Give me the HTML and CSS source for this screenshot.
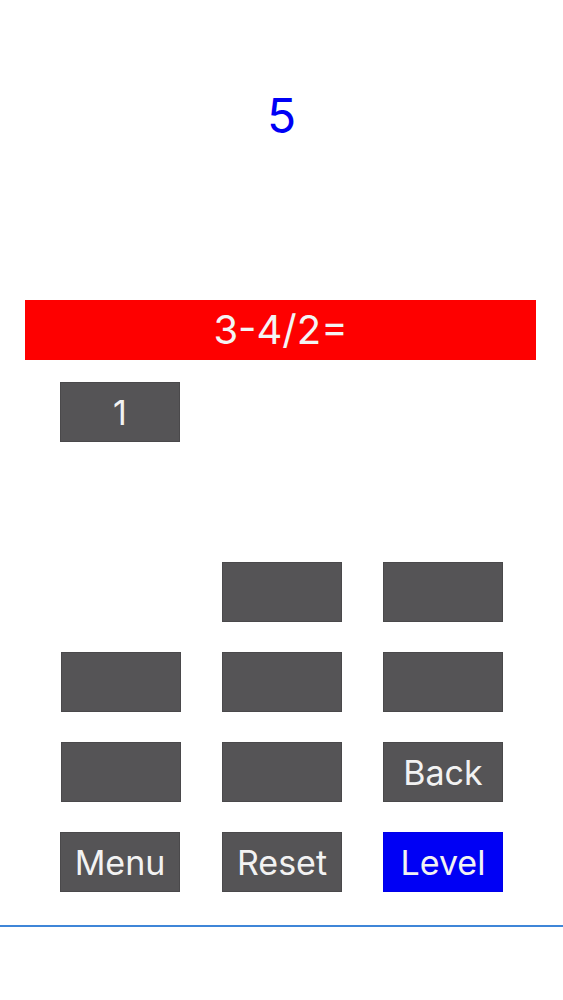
FILE: index.html
```html
<!DOCTYPE html>
<html>
<head>
<meta charset="utf-8">
<link rel="stylesheet" href="styles.css">
</head>
<body>
<div class="app">
  <div class="score">5</div>
  <div class="question">3-4/2=</div>
  <div class="answer-row">
    <div class="tile">1</div>
  </div>
  <div class="keypad">
    <div class="key key-empty"></div>
    <div class="key"></div>
    <div class="key"></div>
    <div class="key"></div>
    <div class="key"></div>
    <div class="key"></div>
    <div class="key"></div>
    <div class="key"></div>
    <div class="key">Back</div>
    <div class="key key-menu">Menu</div>
    <div class="key">Reset</div>
    <div class="key key-level">Level</div>
  </div>
  <div class="divider"></div>
</div>
</body>
</html>
```

FILE: styles.css
```css
html, body {
  margin: 0;
  padding: 0;
  background: #ffffff;
}

body {
  font-family: Inter, "Liberation Sans", Arial, sans-serif;
  width: 563px;
  height: 1000px;
  overflow: hidden;
}

.app {
  display: flex;
  flex-direction: column;
}

.score {
  height: 300px;
  box-sizing: border-box;
  padding-top: 92px;
  font-size: 48px;
  line-height: 48px;
  text-align: center;
  color: #0000f5;
}

.question {
  margin-left: 25px;
  width: 511px;
  height: 60px;
  line-height: 60px;
  background: #fe0000;
  color: #f4f4f4;
  font-size: 40px;
  text-align: center;
}

.answer-row {
  display: flex;
  padding-left: 60px;
  margin-top: 22px;
}

.tile,
.key {
  width: 120px;
  height: 60px;
  box-sizing: border-box;
  background: #555456;
  border: 1px solid #4a494b;
  color: #f2f2f2;
  font-size: 34px;
  display: flex;
  align-items: center;
  justify-content: center;
}

.keypad {
  display: grid;
  grid-template-columns: repeat(3, 120px);
  column-gap: 41px;
  row-gap: 30px;
  padding-left: 61px;
  margin-top: 120px;
}

.key-empty {
  visibility: hidden;
}

.key-menu {
  margin-left: -1px;
}

.key-level {
  background: #0000f5;
  border-color: #0000e8;
}

.divider {
  margin-top: 33px;
  height: 2px;
  background: #3f86d8;
}
```
